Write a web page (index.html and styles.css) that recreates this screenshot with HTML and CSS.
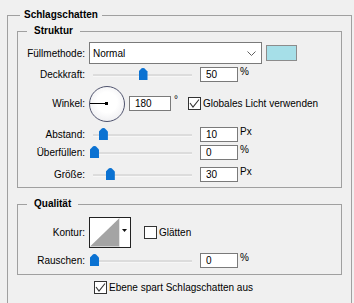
FILE: index.html
```html
<!DOCTYPE html>
<html lang="de">

<head>
  <meta charset="UTF-8">
  <meta name="viewport" content="width=device-width, initial-scale=1.0">
  <title>Schlagschatten</title>

  <link rel="stylesheet" href="styles.css">
</head>

<body>
  <fieldset class="group outer">
    <legend>Schlagschatten</legend>
    <div class="outer-body">

      <fieldset class="group inner">
        <legend>Struktur</legend>
        <div class="inner-body struktur">
          <div class="row row-mode">
            <span class="lbl">Füllmethode:</span>
            <div class="select">
              <span>Normal</span>
              <svg class="chevron" width="9" height="5" viewBox="0 0 9 5">
                <polyline points="0.5,0.5 4.5,4.5 8.5,0.5" fill="none" stroke="#606060" stroke-width="1" />
              </svg>
            </div>
            <span class="swatch"></span>
          </div>

          <div class="row row-opacity">
            <span class="lbl">Deckkraft:</span>
            <div class="slider"><span class="thumb" style="left: 50%"></span></div>
            <input class="num" type="text" value="50">
            <span class="unit">%</span>
          </div>

          <div class="row row-angle">
            <span class="lbl">Winkel:</span>
            <div class="dial"><span class="hand"></span></div>
            <input class="num num-wide" type="text" value="180">
            <span class="unit deg">°</span>
            <span class="check checked">
              <svg width="11" height="11" viewBox="0 0 11 11">
                <polyline points="1,5 4,9 10,1.5" fill="none" stroke="#333" stroke-width="1.1" />
              </svg>
            </span>
            <span class="check-text">Globales Licht verwenden</span>
          </div>

          <div class="row row-distance">
            <span class="lbl">Abstand:</span>
            <div class="slider"><span class="thumb" style="left: 10%"></span></div>
            <input class="num" type="text" value="10">
            <span class="unit">Px</span>
          </div>

          <div class="row row-choke">
            <span class="lbl">Überfüllen:</span>
            <div class="slider"><span class="thumb" style="left: 1%"></span></div>
            <input class="num" type="text" value="0">
            <span class="unit">%</span>
          </div>

          <div class="row row-size">
            <span class="lbl">Größe:</span>
            <div class="slider"><span class="thumb" style="left: 17%"></span></div>
            <input class="num" type="text" value="30">
            <span class="unit">Px</span>
          </div>
        </div>
      </fieldset>

      <fieldset class="group inner quality">
        <legend>Qualität</legend>
        <div class="inner-body">
          <div class="row row-contour">
            <span class="lbl">Kontur:</span>
            <svg class="contour" width="42" height="31" viewBox="0 0 42 31">
              <rect x="0.5" y="0.5" width="41" height="30" fill="#fff" stroke="#222" />
              <polygon points="1,29.5 30.5,1 30.5,29.5" fill="#a4a4a4" />
              <line x1="30.5" y1="1" x2="30.5" y2="30" stroke="#e4e4e4" />
              <polygon points="33,12 38,12 35.5,15" fill="#111" />
            </svg>
            <span class="check smooth"></span>
            <span class="check-text">Glätten</span>
          </div>

          <div class="row row-noise">
            <span class="lbl">Rauschen:</span>
            <div class="slider"><span class="thumb" style="left: 1%"></span></div>
            <input class="num" type="text" value="0">
            <span class="unit">%</span>
          </div>
        </div>
      </fieldset>

      <div class="row row-knockout">
        <span class="check checked">
          <svg width="11" height="11" viewBox="0 0 11 11">
            <polyline points="1,5 4,9 10,1.5" fill="none" stroke="#333" stroke-width="1.1" />
          </svg>
        </span>
        <span class="check-text">Ebene spart Schlagschatten aus</span>
      </div>

    </div>
  </fieldset>
</body>

</html>
```

FILE: styles.css
```css
body {
  margin: 0;
  background: #f0f0f0;
  color: #000;
  font: 10px "Liberation Sans", Arial, sans-serif;
  overflow: hidden;
}

.group {
  border: 1px solid #a0a0a0;
  margin: 0;
  min-width: 0;
  padding: 0;
}

.group>legend {
  font-weight: bold;
  height: 12px;
  line-height: 12px;
  padding: 0 4px;
}

/* bottom edge sits just below the window, like the cut-off dialog */
.outer {
  box-sizing: border-box;
  height: 295px;
  margin: 9px 2px 0 7px;
}

.outer>legend {
  margin-left: 12px;
}

.outer-body {
  padding: 4px 9px 0;
}

.inner>legend {
  margin-left: 9px;
  padding: 0 7px;
}

.inner-body {
  padding: 5px 0 5px;
}

.quality {
  margin-top: 10px;
}

.quality .inner-body {
  padding: 7px 0 6px;
}

.row {
  align-items: center;
  display: flex;
  height: 16px;
}

.lbl {
  margin-right: 4px;
  text-align: right;
  width: 67px;
}

/* row heights / spacing */
.row-mode {
  height: 22px;
}

.row-opacity {
  margin-top: 2px;
}

.row-angle {
  height: 37px;
  margin-top: 3px;
}

.row-distance {
  margin-top: 4px;
}

.row-choke {
  margin-top: 2px;
}

.row-size {
  margin-top: 6px;
}

.row-contour {
  height: 31px;
}

.row-noise {
  margin-top: 4px;
}

.row-knockout {
  height: 13px;
  margin-top: 6px;
  padding-left: 77px;
}

/* controls */
.select {
  align-items: center;
  background: #fff;
  border: 1px solid #7a7a7a;
  box-sizing: border-box;
  display: flex;
  height: 22px;
  justify-content: space-between;
  padding: 0 5px 0 3px;
  width: 173px;
}

.swatch {
  background: #a6dfe8;
  border: 1px solid #8c8c8c;
  box-sizing: border-box;
  height: 16px;
  margin-left: 4px;
  width: 31px;
}

.slider {
  height: 16px;
  margin-left: 4px;
  position: relative;
  width: 99px;
}

.slider::before {
  background: #dcdcdc;
  border-bottom: 1px solid #f7f7f7;
  content: "";
  height: 2px;
  left: 0;
  position: absolute;
  right: 0;
  top: 8px;
}

.thumb {
  background: #0b72d2;
  clip-path: polygon(0 30%, 35% 2%, 50% 0, 65% 2%, 100% 30%, 100% 100%, 0 100%);
  height: 12px;
  margin-left: -4px;
  position: absolute;
  top: 2px;
  width: 9px;
}

.num {
  background: #fff;
  border: 1px solid #7a7a7a;
  box-sizing: border-box;
  font: inherit;
  height: 15px;
  margin: 0 0 0 8px;
  outline: none;
  padding: 0 0 0 5px;
  width: 38px;
}

.num-wide {
  margin-left: 4px;
  width: 42px;
}

.unit {
  align-self: flex-start;
  line-height: 12px;
  margin-left: 2px;
}

.deg {
  align-self: center;
  margin: 0 0 8px 3px;
}

.dial {
  background: radial-gradient(circle at 50% 45%, #fff 40%, #e6e6ea 100%);
  border: 1.5px solid #50546e;
  border-radius: 50%;
  box-sizing: border-box;
  height: 36px;
  position: relative;
  width: 36px;
}

.hand {
  background: #000;
  height: 1px;
  left: 0;
  position: absolute;
  top: 16px;
  width: 17px;
}

.hand::after {
  background: #000;
  content: "";
  height: 3px;
  position: absolute;
  right: -1px;
  top: -1px;
  width: 3px;
}

.check {
  align-items: center;
  background: #fff;
  border: 1px solid #333;
  box-sizing: border-box;
  display: flex;
  flex-shrink: 0;
  height: 13px;
  justify-content: center;
  width: 13px;
}

.row-angle .check {
  margin-left: 10px;
}

.smooth {
  margin-left: 13px;
}

.check-text {
  margin-left: 2px;
  white-space: nowrap;
}
```
